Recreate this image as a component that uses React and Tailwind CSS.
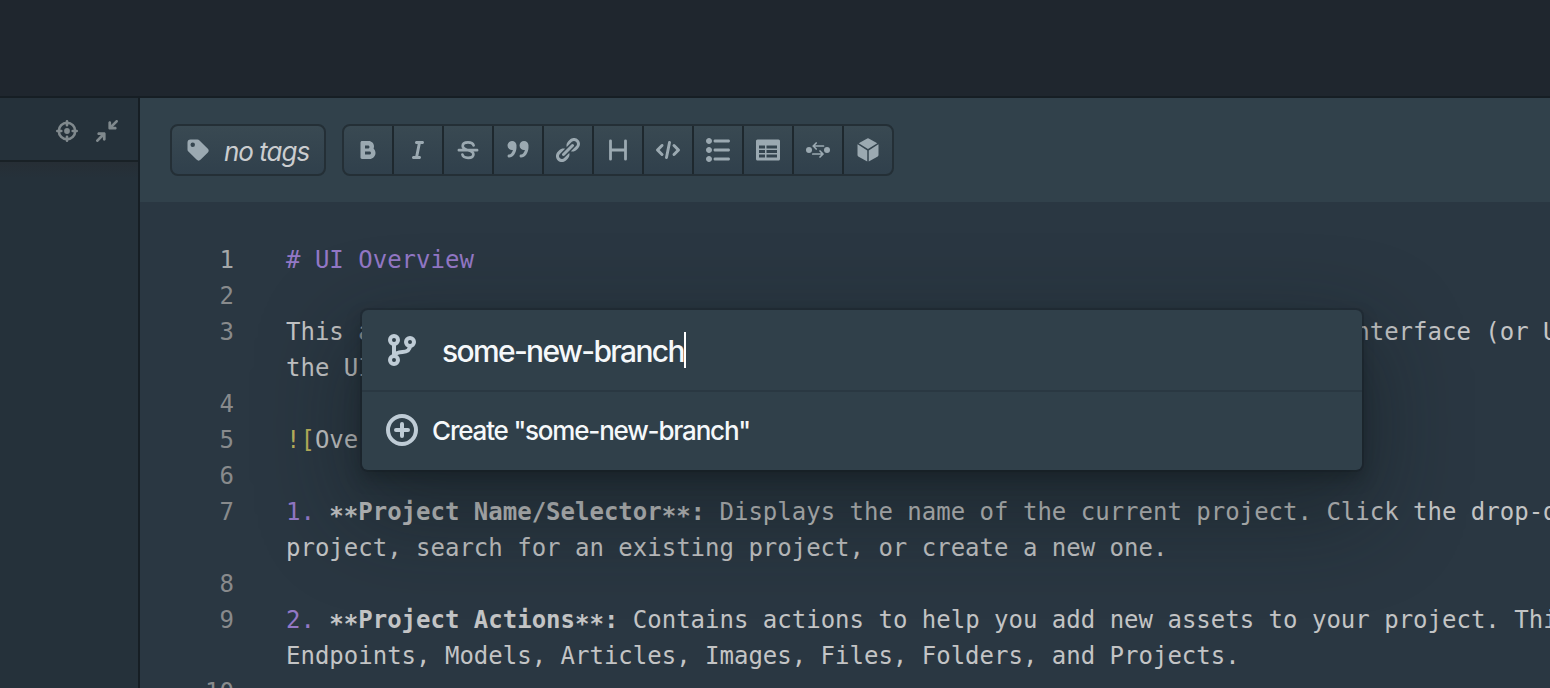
const PATHS = {
  tag: 'M1 3a2 2 0 012-2h4.584a2 2 0 011.414.586l5.413 5.412a2 2 0 010 2.829L9.827 14.41a2 2 0 01-2.829 0L1.586 9A2 2 0 011 7.584V3zm3.487-.007a1.494 1.494 0 100 2.988 1.494 1.494 0 000-2.988z',
  bold: 'M11.7 7c.2-.4.3-1 .3-1.5C12 3.6 10.4 2 8.5 2H4c-.5 0-1 .4-1 1v10c0 .5.4 1 1 1h5c2.2 0 4-1.8 4-4 0-1.2-.5-2.300-1.300-3zM6 5h2c.6 0 1 .4 1 1s-.4 1-1 1H6V5zm3 6H6V9h3c.6 0 1 .4 1 1s-.4 1-1 1z',
  italic: 'M9.800 4H11c.5 0 1-.4 1-1s-.4-1-1-1H7c-.5 0-1 .4-1 1s.4 1 1 1h.8l-1.600 8H5c-.5 0-1 .4-1 1s.4 1 1 1h4c.5 0 1-.4 1-1s-.4-1-1-1h-.8l1.600-8z',
  quote: 'M15.02 5c0-1.66-1.34-3-3-3s-3 1.340-3 3a2.996 2.996 0 003.600 2.940C12.100 9.760 11.140 11 10.020 11c-.55 0-1 .45-1 1s.45 1 1 1c2.760 0 5-3.130 5-7 0-.2-.02-.39-.04-.58.02-.14.04-.28.04-.42zm-11-3c-1.660 0-3 1.340-3 3a2.996 2.996 0 003.600 2.940C4.100 9.760 3.140 11 2.020 11c-.55 0-1 .45-1 1s.45 1 1 1c2.760 0 5-3.130 5-7 0-.2-.02-.39-.04-.58.02-.14.04-.28.04-.42 0-1.660-1.340-3-3-3z',
  link: 'M4.99 11.99c.28 0 .53-.11.71-.29l6-6a1.003 1.003 0 00-1.42-1.42l-6 6c-.18.18-.29.43-.29.71 0 .56.45 1 1 1zm3.85-2.02L6.4 12.41l-1 1-.01-.01c-.36.36-.85.6-1.4.6-1.1 0-2-.9-2-2 0-.55.24-1.04.6-1.4l-.01-.01 1-1 2.44-2.44c-.33-.1-.67-.16-1.03-.16-1.1 0-2.09.46-2.81 1.190l-.02-.02-1 1 .02.02c-.73.72-1.19 1.71-1.19 2.81 0 2.21 1.79 4 4 4 1.1 0 2.09-.46 2.81-1.19l.02.02 1-1-.02-.02c.73-.72 1.19-1.71 1.19-2.81 0-.35-.06-.69-.15-1.02zm7.15-5.98c0-2.21-1.79-4-4-4-1.1 0-2.09.46-2.81 1.19l-.02-.02-1 1 .02.02c-.72.72-1.19 1.71-1.19 2.81 0 .35.06.69.15 1.02l2.44-2.44 1-1 .01.01c.36-.36.85-.6 1.4-.6 1.1 0 2 .9 2 2 0 .55-.24 1.04-.6 1.4l.01.01-1 1-2.44 2.44c.33.1.67.16 1.03.16 1.1 0 2.09-.46 2.81-1.19l.02.02 1-1-.02-.02a3.92 3.92 0 001.19-2.81z',
  code: 'M15.71 7.29l-3-3a1.003 1.003 0 00-1.42 1.42L13.59 8l-2.29 2.29c-.19.18-.3.43-.3.71a1.003 1.003 0 001.71.71l3-3c.18-.18.29-.43.29-.71 0-.28-.11-.53-.29-.71zM5 5a1.003 1.003 0 00-1.71-.71l-3 3C.11 7.470 0 7.720 0 8c0 .28.11.53.29.71l3 3a1.003 1.003 0 001.42-1.42L2.41 8 4.700 5.710c.19-.18.3-.43.3-.71zm4-3c-.48 0-.87.35-.96.81l-2 10c-.01.06-.04.12-.04.19 0 .55.45 1 1 1 .48 0 .87-.35.96-.81l2-10c.01-.06.04-.12.04-.19 0-.55-.45-1-1-1z',
  list: 'M2 6C.9 6 0 6.9 0 8s.9 2 2 2 2-.9 2-2-.9-2-2-2zm4-3h9c.55 0 1-.45 1-1s-.45-1-1-1H6c-.55 0-1 .45-1 1s.45 1 1 1zm-4 9c-1.1 0-2 .9-2 2s.9 2 2 2 2-.9 2-2-.9-2-2-2zm13-5H6c-.55 0-1 .45-1 1s.45 1 1 1h9c.55 0 1-.45 1-1s-.45-1-1-1zm0 6H6c-.55 0-1 .45-1 1s.45 1 1 1h9c.55 0 1-.45 1-1s-.45-1-1-1zM2 0C.9 0 0 .9 0 2s.9 2 2 2 2-.9 2-2-.9-2-2-2z',
  table: 'M15 1H1c-.6 0-1 .5-1 1v12c0 .6.4 1 1 1h14c.6 0 1-.4 1-1V2c0-.5-.4-1-1-1zM6 13H2v-2h4v2zm0-3H2V8h4v2zm0-3H2V5h4v2zm8 6H7v-2h7v2zm0-3H7V8h7v2zm0-3H7V5h7v2z',
  cube: 'M14.194 3.54L8 7.41 1.806 3.54 7.504.283a1 1 0 01.992 0l5.698 3.255zm.75.708A1 1 0 0115 4.600v6.800a1 1 0 01-.504.868L8.500 15.694V8.277l6.444-4.030zm-13.888 0L7.500 8.277v7.417l-5.996-3.426A1 1 0 011 11.400V4.600c0-.119.020-.237.056-.352z',
  minimize: 'M15.99.99a1.003 1.003 0 00-1.71-.71L11 3.570V1.990c0-.55-.45-1-1-1s-1 .45-1 1v4c0 .55.45 1 1 1h4c.55 0 1-.45 1-1s-.45-1-1-1h-1.590l3.290-3.290c.18-.18.29-.43.29-.71zm-10 8h-4c-.55 0-1 .45-1 1s.45 1 1 1h1.590L.29 14.280a1.003 1.003 0 001.420 1.420L5 12.410V14c0 .55.45 1 1 1s1-.45 1-1v-4c0-.56-.45-1.010-1.010-1.010z',
};

function Glyph({ name, className = 'size-6' }) {
  return (
    <svg viewBox="0 0 16 16" fill="currentColor" fillRule="evenodd" className={className}>
      <path d={PATHS[name]} />
    </svg>
  );
}

function Strike() {
  return (
    <svg viewBox="0 0 24 24" fill="none" stroke="currentColor" strokeWidth="2.7" strokeLinecap="round" className="size-6">
      <path d="M2.900 12.200h18.200M17.600 7.400C17 5.300 14.800 4.300 12 4.300c-3 0-5.300 1.300-5.300 3.700 0 2.300 1.800 3.300 5.300 4.200 3.600.9 5.400 1.800 5.400 4 0 2.400-2.300 3.600-5.300 3.600-3.100 0-5.200-1.200-5.700-3.300" />
    </svg>
  );
}

function Heading() {
  return (
    <svg viewBox="0 0 24 24" fill="none" stroke="currentColor" strokeWidth="2.800" strokeLinecap="round" className="size-6">
      <path d="M4.500 2.800v18.400M19.500 2.800v18.400M4.500 12h15" />
    </svg>
  );
}

function Exchange() {
  return (
    <svg viewBox="0 0 24 24" fill="none" stroke="currentColor" strokeWidth="1.700" strokeLinecap="round" strokeLinejoin="round" className="size-6">
      <circle cx="3" cy="12" r="3" fill="currentColor" stroke="none" />
      <circle cx="21" cy="12" r="3" fill="currentColor" stroke="none" />
      <path d="M17.500 8H7.200M10.200 5L7.200 8l3 3M6.800 16h10.200M14 13l3 3-3 3" />
    </svg>
  );
}

function Locate() {
  return (
    <svg viewBox="0 0 22 22" fill="none" stroke="currentColor" strokeWidth="2.600" className="size-[22px]">
      <circle cx="11" cy="11" r="8.200" />
      <circle cx="11" cy="11" r="2.900" fill="currentColor" stroke="none" />
      <path d="M11 1.300v4M11 16.700v4M1.300 11h4M16.700 11h4" strokeLinecap="round" />
    </svg>
  );
}

function Branch() {
  return (
    <svg viewBox="0 0 32 32" fill="none" stroke="currentColor" strokeWidth="4" className="size-8">
      <circle cx="8" cy="6" r="4" />
      <circle cx="24" cy="8" r="4" />
      <circle cx="8" cy="26" r="4" />
      <path d="M8 10v12M24 12c-.4 4.800-3.200 5.700-7.500 6-4.500.3-7 .8-8.300 3.500" />
    </svg>
  );
}

function PlusCircle() {
  return (
    <svg viewBox="0 0 32 32" fill="none" stroke="currentColor" strokeWidth="4" className="size-8">
      <circle cx="16" cy="16" r="14" />
      <path d="M16 10v12M10 16h12" strokeLinecap="round" />
    </svg>
  );
}

const TOOLS = [
  <Glyph name="bold" />,
  <Glyph name="italic" />,
  <Strike />,
  <Glyph name="quote" />,
  <Glyph name="link" />,
  <Heading />,
  <Glyph name="code" />,
  <Glyph name="list" />,
  <Glyph name="table" />,
  <Exchange />,
  <Glyph name="cube" />,
];

function P({ children }) {
  return <span className="text-[#9378c6]">{children}</span>;
}

function Stars() {
  return <span className="align-[-4px] leading-none">**</span>;
}

const LINES = [
  [1, <P># UI Overview</P>],
  [2, ''],
  [3, 'This article introduces the different areas of the Studio graphical user interface (or UI).'],
  ['', 'the UI.'],
  [4, ''],
  [5, <><span className="text-[#bab25c]">![</span>Overview<span className="text-[#bab25c]">]</span></>],
  [6, ''],
  [7, <><P>1. </P><b><Stars />Project Name/Selector<Stars />:</b> Displays the name of the current project. Click the drop-down</>],
  ['', 'project, search for an existing project, or create a new one.'],
  [8, ''],
  [9, <><P>2. </P><b><Stars />Project Actions<Stars />:</b> Contains actions to help you add new assets to your project. This</>],
  ['', 'Endpoints, Models, Articles, Images, Files, Folders, and Projects.'],
  [10, ''],
];

export default function App() {
  return (
    <div className="relative flex h-[688px] w-full flex-col overflow-hidden bg-[#2a3742] font-['Inter',sans-serif]">
      <header className="h-[98px] shrink-0 border-b-2 border-[#161e24] bg-[#1f262e]" />
      <div className="flex min-h-0 flex-1">
        <aside className="flex w-[140px] shrink-0 flex-col border-r-2 border-[#161e24] bg-[#25313a]">
          <div className="flex h-16 shrink-0 items-center justify-end gap-[18px] border-b-2 border-[#192126] pt-1 pr-5 text-[#80898d]">
            <Locate />
            <Glyph name="minimize" className="size-[22px]" />
          </div>
          <div className="h-4 bg-linear-to-b from-[#262e35] to-[#25313a]" />
        </aside>
        <main className="flex min-w-0 flex-1 flex-col">
          <div className="flex h-[104px] shrink-0 items-center gap-4 bg-[#31414b] pl-[30px] text-[#9ba9b1]">
            <div className="flex h-[52px] w-[156px] items-center gap-[14px] rounded-lg border-2 border-[#242f36] bg-linear-to-b from-[#394952] to-[#30404c] pl-[14px]">
              <Glyph name="tag" />
              <span className="pt-0.5 text-[26px] font-[450] tracking-[-1px] whitespace-nowrap text-[#cbcdcf] italic">no tags</span>
            </div>
            <div className="flex h-[52px] divide-x-2 divide-[#1e282e] overflow-hidden rounded-lg border-2 border-[#242f36] bg-linear-to-b from-[#394952] to-[#30404c]">
              {TOOLS.map((icon, i) => (
                <div key={i} className="box-content flex w-12 items-center justify-center">
                  {icon}
                </div>
              ))}
            </div>
          </div>
          <div className="min-h-0 flex-1 overflow-hidden pt-10 font-['DejaVu_Sans_Mono',monospace] text-2xl leading-9 text-[#c3c4c5]">
            {LINES.map(([n, text], i) => (
              <div key={i} className="flex h-9 whitespace-pre">
                <span className={i === 0 ? 'w-[94px] shrink-0 text-right text-[#a5a8aa]' : 'w-[94px] shrink-0 text-right text-[#888a8c]'}>{n}</span>
                <span className="pl-[52px]">{text}</span>
              </div>
            ))}
          </div>
        </main>
      </div>
      <div className="absolute top-[310px] left-[362px] flex h-40 w-[1000px] flex-col rounded-md bg-[#30404a] text-[#f5f8fa] shadow-[0_0_0_2px_rgba(16,22,26,0.2),0_8px_16px_rgba(16,22,26,0.4),0_36px_92px_12px_rgba(16,22,26,0.4)]">
        <div className="flex h-[82px] items-center border-b-2 border-[#2a3842] pl-6">
          <span className="text-[#bfccd6]"><Branch /></span>
          <span className="ml-6 pt-[3px] text-[30px] font-[450] tracking-[-1.660px] whitespace-nowrap">some-new-branch</span>
          <span className="h-9 w-0.5 bg-white" />
        </div>
        <div className="flex flex-1 items-center gap-[14px] pb-0.5 pl-6">
          <span className="text-[#bfccd6]"><PlusCircle /></span>
          <span className="pt-px text-[26px] font-[450] tracking-[-1.190px] whitespace-nowrap">Create "some-new-branch"</span>
        </div>
      </div>
    </div>
  );
}
